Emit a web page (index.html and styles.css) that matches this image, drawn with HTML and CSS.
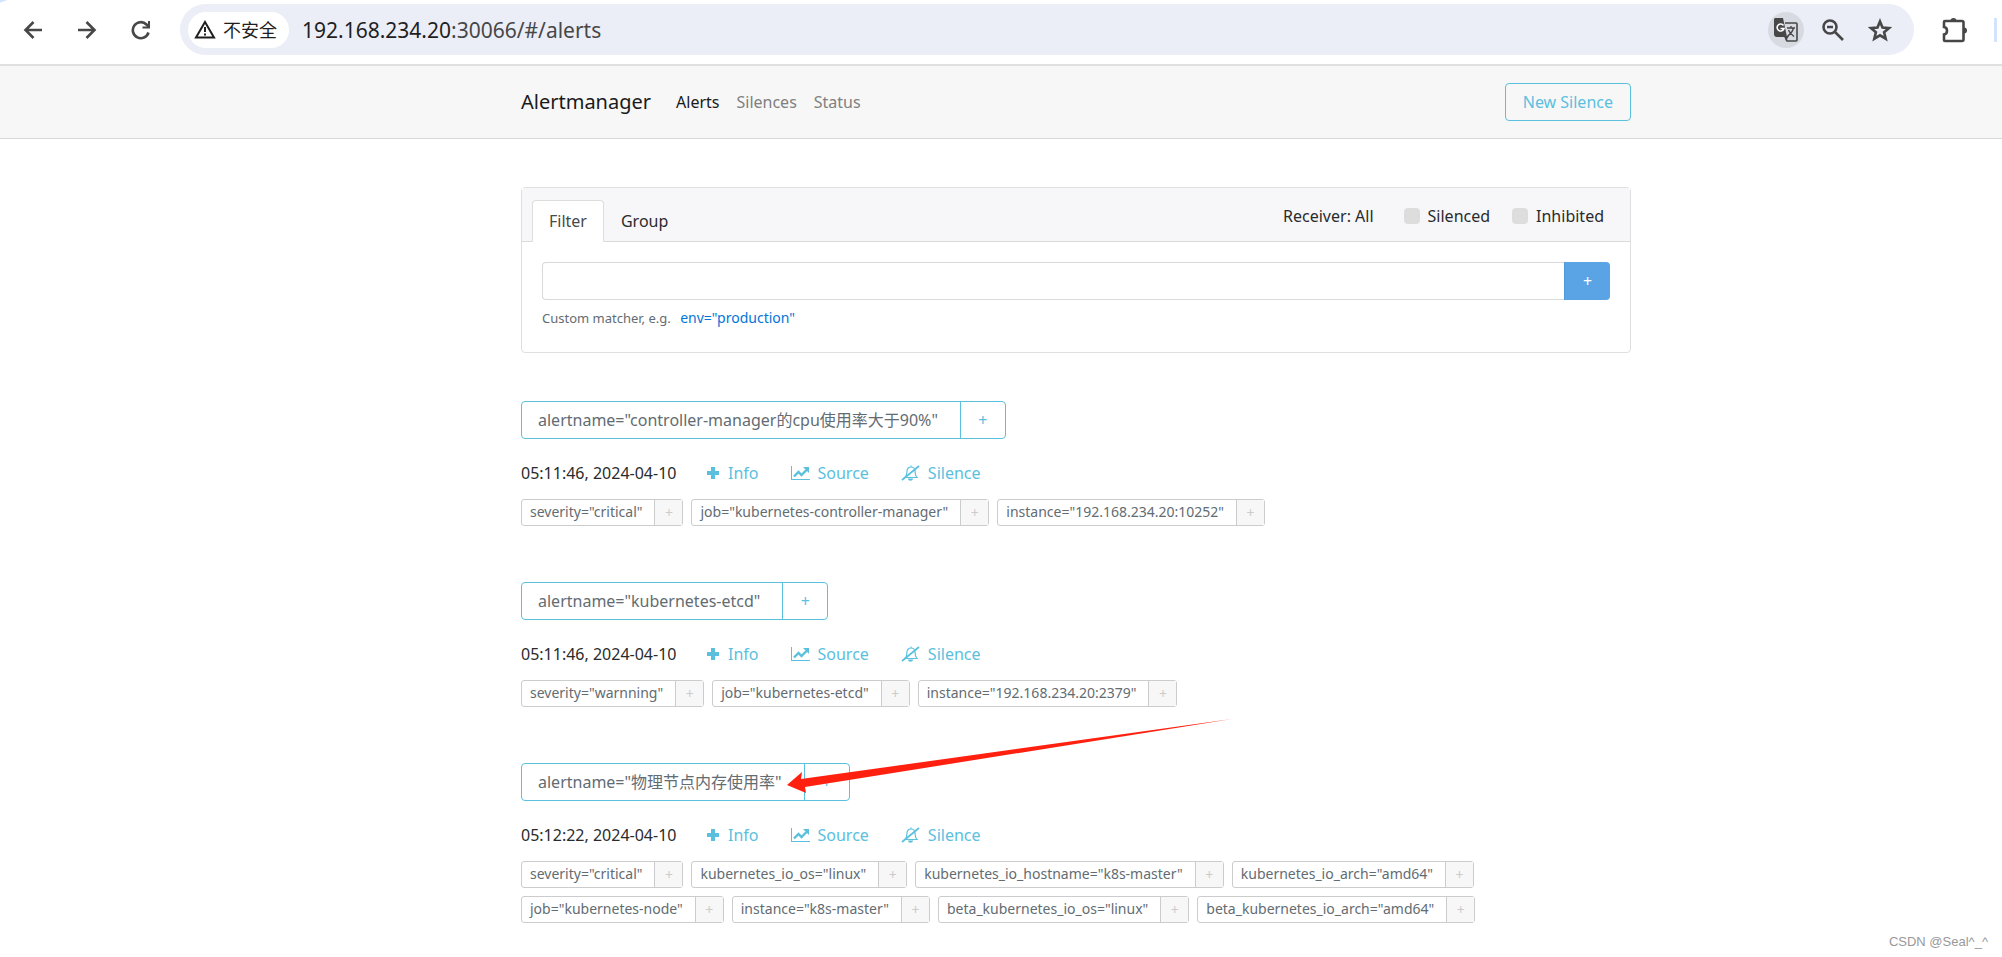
FILE: index.html
```html
<!DOCTYPE html>
<html lang="zh-CN">
<head>
<meta charset="utf-8">
<title>Alertmanager</title>
<link rel="stylesheet" href="styles.css">
</head>
<body>
<svg class="sprite" aria-hidden="true">
  <symbol id="plus" viewBox="0 0 14 14"><path d="M5 1h4v4h4v4H9v4H5V9H1V5h4z" fill="currentColor"/></symbol>
  <symbol id="chart" viewBox="0 0 19 14"><path d="M0 0h1v13h18v1H0z" fill="currentColor"/><path d="M3 10.500 7.500 6l3 3 5-5" fill="none" stroke="currentColor" stroke-width="2.400"/><path d="M12 1h6v6z" fill="currentColor"/></symbol>
  <symbol id="bell-off" viewBox="0 0 19 18"><path d="M4 13.500c2-2 2-4 2-6.500 0-2 1.500-4 4-4s4 2 4 4c0 2.500 0 4.500 2 6.500zM10 1.500V3" fill="none" stroke="currentColor" stroke-width="1.200"/><path d="M1 16 18 2" stroke="currentColor" stroke-width="1.700"/><path d="M7 14.500h5c0 3-5 3-5 0z" fill="currentColor"/></symbol>
</svg>

<header class="toolbar">
  <button class="tool" aria-label="Back"><svg width="20" height="20" viewBox="0 0 20 20"><path d="M19 10H3M10.500 2 2.500 10l8 8" class="line"/></svg></button>
  <button class="tool" aria-label="Forward"><svg width="20" height="20" viewBox="0 0 20 20"><path d="M1 10h16M9.500 2l8 8-8 8" class="line"/></svg></button>
  <button class="tool" aria-label="Reload"><svg width="20" height="20" viewBox="0 0 20 20"><path d="M17.500 12.500a8 8 0 1 1-2-8L18 7" class="line"/><path d="M19 1v7.500h-7.500V6.500H17V1z" fill="currentColor"/></svg></button>
  <div class="address">
    <button class="security"><svg width="22" height="19" viewBox="0 0 22 19"><path d="M11 2 20 17.500H2z" fill="none" stroke="currentColor" stroke-width="2"/><path d="M10 7h2v5h-2zM10 13.500h2v2h-2z" fill="currentColor"/></svg>不安全</button>
    <span class="url"><b>192.168.234.20</b>:30066/#/alerts</span>
    <button class="translate" aria-label="Translate"><svg width="26" height="26" viewBox="0 0 26 26"><path d="M2 1h8l4 19H4a3 3 0 0 1-3-3V3a2 2 0 0 1 1-2z" fill="currentColor"/><path d="M12 6h11a1 1 0 0 1 1 1v16a1 1 0 0 1-1 1h-9l-2-5" fill="none" stroke="currentColor" stroke-width="1.600"/><path d="m11 19 5 0-3 5z" fill="currentColor"/><path d="M10.500 8.500a3.500 3.500 0 1 0 .5 3H7.500" fill="none" stroke="#fff" stroke-width="1.600"/><path d="M14 11h8M18 9v2M20.500 11c-1 4-3 6-6 8M15.500 13c1 3 3 4.500 5.500 6.500" fill="none" stroke="currentColor" stroke-width="1.400"/></svg></button>
    <button class="tool" aria-label="Zoom"><svg width="22" height="22" viewBox="0 0 22 22"><circle cx="8" cy="8" r="6.500" class="line"/><path d="m12.500 12.500 8.500 8.500M5 8h6" class="line"/></svg></button>
    <button class="tool" aria-label="Bookmark"><svg width="24" height="24" viewBox="0 0 24 24"><path d="m12 3.500 2.500 6 6.600.6-5 4.200 1.600 6.400-5.700-3.400-5.700 3.400 1.600-6.400-5-4.200 6.600-.6z" class="line"/></svg></button>
  </div>
  <button class="tool" aria-label="Extensions"><svg width="26" height="26" viewBox="0 0 26 26"><path d="M3 4h17a1.500 1.500 0 0 1 1.500 1.500v17A1.500 1.500 0 0 1 20 24H3a1 1 0 0 1-1-1v-5.500c4-.5 4-7 0-7.500V5a1 1 0 0 1 1-1z" class="line"/><path d="M8.500 4a3 3 0 0 1 6 0zM22 10.500a3 3 0 0 1 0 6z" fill="currentColor"/></svg></button>
  <span class="divider"></span>
</header>

<nav class="navbar">
  <div class="nav-inner">
    <a class="brand" href="#/">Alertmanager</a>
    <a class="nav-link active" href="#/alerts">Alerts</a>
    <a class="nav-link" href="#/silences">Silences</a>
    <a class="nav-link" href="#/status">Status</a>
    <a class="new-silence" href="#/silences/new">New Silence</a>
  </div>
</nav>

<main class="page">
  <div class="content">
    <section class="card">
      <div class="card-header">
        <button class="tab active">Filter</button>
        <button class="tab">Group</button>
        <span class="receiver">Receiver: All</span>
        <label class="check"><input type="checkbox">Silenced</label>
        <label class="check"><input type="checkbox">Inhibited</label>
      </div>
      <div class="card-body">
        <div class="matcher"><input type="text" aria-label="Custom matcher"><button aria-label="Add matcher">+</button></div>
        <p class="help">Custom matcher, e.g. <a href="#env">env="production"</a></p>
      </div>
    </section>

    <section class="group">
      <div class="group-name"><span>alertname="controller-manager的cpu使用率大于90%"</span><button>+</button></div>
      <div class="actions"><time>05:11:46, 2024-04-10</time><button class="info"><svg width="14" height="14"><use href="#plus"/></svg>Info</button><a href="#source"><svg width="19" height="14"><use href="#chart"/></svg>Source</a><a href="#silence"><svg width="19" height="18"><use href="#bell-off"/></svg>Silence</a></div>
      <div class="labels">
        <div class="label"><span>severity="critical"</span><button>+</button></div>
        <div class="label"><span>job="kubernetes-controller-manager"</span><button>+</button></div>
        <div class="label"><span>instance="192.168.234.20:10252"</span><button>+</button></div>
      </div>
    </section>

    <section class="group">
      <div class="group-name"><span>alertname="kubernetes-etcd"</span><button>+</button></div>
      <div class="actions"><time>05:11:46, 2024-04-10</time><button class="info"><svg width="14" height="14"><use href="#plus"/></svg>Info</button><a href="#source"><svg width="19" height="14"><use href="#chart"/></svg>Source</a><a href="#silence"><svg width="19" height="18"><use href="#bell-off"/></svg>Silence</a></div>
      <div class="labels">
        <div class="label"><span>severity="warnning"</span><button>+</button></div>
        <div class="label"><span>job="kubernetes-etcd"</span><button>+</button></div>
        <div class="label"><span>instance="192.168.234.20:2379"</span><button>+</button></div>
      </div>
    </section>

    <section class="group">
      <div class="group-name"><span>alertname="物理节点内存使用率"</span><button>+</button>
        <svg class="arrow" width="446" height="76" viewBox="0 0 446 76"><path d="M0 66 15 53 14 60 445 0 18 68 19 74z" fill="#ff2010"/></svg>
      </div>
      <div class="actions"><time>05:12:22, 2024-04-10</time><button class="info"><svg width="14" height="14"><use href="#plus"/></svg>Info</button><a href="#source"><svg width="19" height="14"><use href="#chart"/></svg>Source</a><a href="#silence"><svg width="19" height="18"><use href="#bell-off"/></svg>Silence</a></div>
      <div class="labels">
        <div class="label"><span>severity="critical"</span><button>+</button></div>
        <div class="label"><span>kubernetes_io_os="linux"</span><button>+</button></div>
        <div class="label"><span>kubernetes_io_hostname="k8s-master"</span><button>+</button></div>
        <div class="label"><span>kubernetes_io_arch="amd64"</span><button>+</button></div>
        <div class="label"><span>job="kubernetes-node"</span><button>+</button></div>
        <div class="label"><span>instance="k8s-master"</span><button>+</button></div>
        <div class="label"><span>beta_kubernetes_io_os="linux"</span><button>+</button></div>
        <div class="label"><span>beta_kubernetes_io_arch="amd64"</span><button>+</button></div>
      </div>
    </section>
  </div>
</main>
<span class="watermark">CSDN @Seal^_^</span>
</body>
</html>
```
FILE: styles.css
```css
* { box-sizing: border-box; }
body {
  margin: 0;
  background: #fff;
  color: #292b2c;
  font: 16px/24px "Noto Sans", "Noto Sans CJK SC", sans-serif;
}
button, input { font: inherit; color: inherit; margin: 0; }
button { background: none; border: 0; padding: 0; cursor: pointer; }
a { text-decoration: none; }
svg { display: block; }
.sprite { position: absolute; width: 0; height: 0; }

/* Browser toolbar */
.toolbar {
  display: flex;
  align-items: center;
  gap: 34px;
  height: 66px;
  padding: 4px 5px 9px 23px;
  border-bottom: 2px solid #e0e0e0;
  background: linear-gradient(160deg, #d3e3fd 2px, #fff 3px);
  color: #474747;
}
.line { fill: none; stroke: currentColor; stroke-width: 2.6; }
.address {
  display: flex;
  align-items: center;
  flex: 1;
  gap: 24px;
  height: 51px;
  margin-right: -6px;
  margin-left: -5px;
  padding: 0 22px 0 8px;
  border-radius: 26px;
  background: #ebeef7;
}
.security {
  display: flex;
  align-items: center;
  gap: 7px;
  height: 36px;
  padding: 0 12px 0 6px;
  border-radius: 18px;
  background: #fff;
  color: #1f1f1f;
  font-size: 18px;
}
.url { flex: 1; margin-left: -11px; font-size: 21px; }
.url b { color: #1f1f1f; font-weight: 400; }
.translate {
  display: grid;
  place-items: center;
  width: 36px;
  height: 36px;
  margin-right: -6px;
  border-radius: 50%;
  background: #d8dae2;
}
.divider { width: 3px; height: 24px; margin-left: -8px; background: #d3e3fd; }

/* Page columns shared by navbar and content */
.navbar, .page {
  display: grid;
  grid-template-columns: 521fr minmax(0, 1110px) 371fr;
}
.nav-inner, .content { grid-column: 2; }
.navbar { background: #f7f7f7; border-bottom: 1px solid #d9d9d9; }
.nav-inner { display: flex; align-items: center; gap: 17px; padding: 17px 0; }
.brand { margin-right: 8px; color: #1a1a1a; font-size: 20px; }
.nav-link { color: #808080; }
.nav-link.active { color: #1a1a1a; }
.new-silence {
  margin-left: auto;
  padding: 6px 17px;
  border: 1px solid #5bc0de;
  border-radius: 4px;
  color: #5bc0de;
}

/* Filter card */
.card { margin-top: 48px; border: 1px solid #dfdfdf; border-radius: 4px; }
.card-header {
  display: flex;
  align-items: flex-end;
  padding: 12px 26px 0 10px;
  border-bottom: 1px solid #dadada;
  background: #f7f7f9;
}
.tab {
  height: 42px;
  margin-bottom: -1px;
  padding: 0 16px;
  border: 1px solid transparent;
  border-radius: 4px 4px 0 0;
}
.tab.active { border-color: #ddd #ddd #fff; background: #fff; color: #464a4c; }
.receiver { margin-left: auto; padding-bottom: 13px; }
.check { display: flex; align-items: center; gap: 8px; padding-bottom: 13px; margin-left: 22px; }
.receiver + .check { margin-left: 30px; }
.check input { appearance: none; width: 16px; height: 16px; border-radius: 4px; background: #ddd; }
.card-body { padding: 20px 20px 22px; }
.matcher { display: flex; }
.matcher input {
  flex: 1;
  height: 38px;
  padding: 0 12px;
  border: 1px solid #d9d9d9;
  border-right: 0;
  border-radius: 4px 0 0 4px;
  background: #fff;
}
.matcher button {
  width: 46px;
  border-left: 1px solid #4f99dd;
  border-radius: 0 4px 4px 0;
  background: #5aa3e5;
  color: #fff;
}
.help { margin: 6px 0 0; color: #636c72; font-size: 13px; }
.help a { margin-left: 6px; color: #0275d8; font-size: 14px; }

/* Alert groups */
.group { margin-top: 48px; }
.group + .group { margin-top: 56px; }
.group-name {
  position: relative;
  display: flex;
  width: max-content;
  height: 38px;
  border: 1px solid #5bc0de;
  border-radius: 4px;
  color: #636c72;
}
.group-name span { padding: 6px 22px 6px 16px; }
.group-name button { width: 45px; border-left: 1px solid #5bc0de; color: #5bc0de; }
.arrow { position: absolute; left: 265px; top: -45px; z-index: 1; }
.actions { display: flex; align-items: center; gap: 32px; margin-top: 22px; }
.actions time { min-width: 161px; }
.actions a, .info { display: flex; align-items: center; gap: 8px; color: #5bc0de; }
.actions .info { margin-left: -8px; }
.labels { display: flex; flex-wrap: wrap; gap: 8px; max-width: 980px; margin-top: 14px; }
.label {
  display: flex;
  height: 27px;
  border: 1px solid #ccc;
  border-radius: 3px;
  color: #636c72;
  font-size: 14px;
  line-height: 24px;
}
.label span { padding: 0 12px 0 8px; }
.label button { width: 28px; border-left: 1px solid #ccc; background: #f7f7f7; color: #ccc; }

.watermark { position: absolute; right: 14px; bottom: 3px; color: #999; font: 13px/24px "Liberation Sans", sans-serif; }
```
